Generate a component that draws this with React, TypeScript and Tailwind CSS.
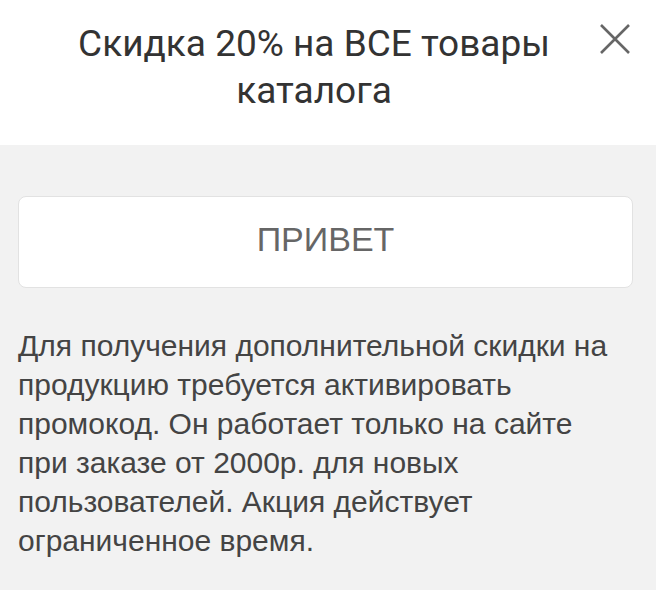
import React from 'react';

export default function App() {
  return (
    <div className="w-[656px] h-[590px] bg-[#f2f2f2] font-['Roboto',sans-serif] overflow-hidden">
      {/* header */}
      <div className="relative bg-white h-[145px] pt-[20px] pl-[34px] pr-[62px]">
        <h1 className="text-center text-[37px] leading-[47px] text-[#333] font-normal">
          Скидка 20% на ВСЕ товары каталога
        </h1>
        <button className="absolute right-[24px] top-[22px] w-[34px] h-[34px] flex items-center justify-center text-[#666]">
          <svg width="32" height="32" viewBox="0 0 32 32" fill="none" stroke="currentColor" strokeWidth="2.6">
            <path d="M2 2 L30 30 M30 2 L2 30" />
          </svg>
        </button>
      </div>

      {/* body */}
      <div className="pl-[18px] pr-[23px] pt-[51px]">
        <div className="h-[92px] bg-white border border-[#e2e2e2] rounded-[8px] flex items-center justify-center pb-[6px]">
          <span className="text-[34px] text-[#666] font-['Liberation_Sans',Arial,sans-serif]">ПРИВЕТ</span>
        </div>
        <p className="mt-[38px] pr-[14px] text-[30px] leading-[39px] text-[#444] font-['Liberation_Sans',Arial,sans-serif]">
          Для получения дополнительной скидки на продукцию требуется активировать промокод. Он работает только на сайте при заказе от 2000р. для новых пользователей. Акция действует ограниченное время.
        </p>
      </div>
    </div>
  );
}
